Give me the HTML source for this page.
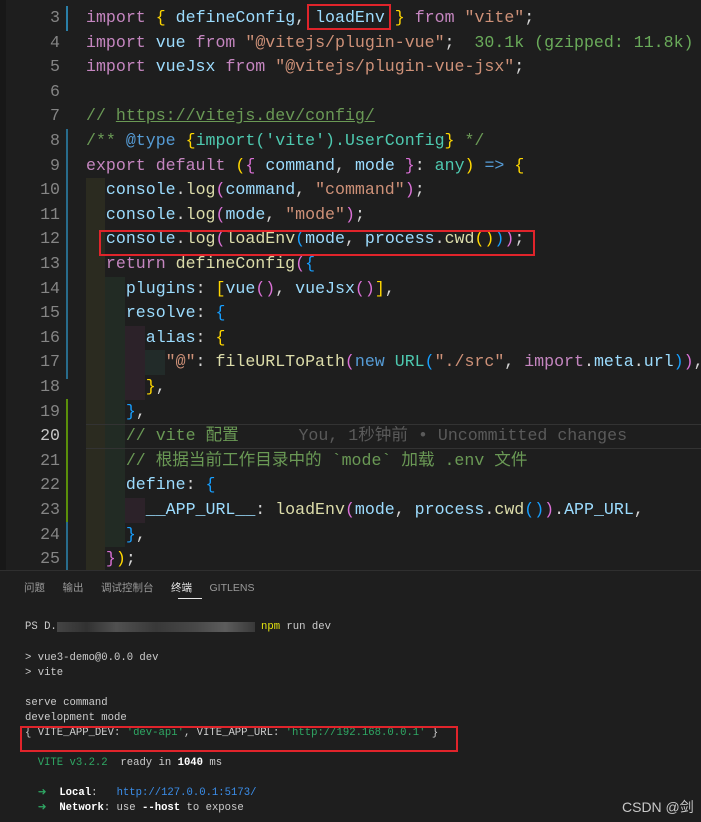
<!DOCTYPE html>
<html><head><meta charset="utf-8"><style>
body{margin:0;width:701px;height:821px;background:#1e1e1e;overflow:hidden;position:relative;font-family:"Liberation Mono","Noto Sans CJK SC",monospace}
.l{position:absolute;left:0;height:24.6px;line-height:24.6px;font-size:16.6px;white-space:pre;color:#d4d4d4}
.n{position:absolute;width:60px;text-align:right;color:#858585;left:0}
.c{position:absolute;left:86px}
.k{color:#c586c0}.s{color:#ce9178}.v{color:#9cdcfe}.f{color:#dcdcaa}.y{color:#ffd700}.p{color:#da70d6}.b{color:#179fff}.g{color:#6a9955}.t{color:#4ec9b0}.bl{color:#569cd6}.w{color:#d4d4d4}
.ig{position:absolute}
.t2{position:absolute;left:25px;font-size:10.6px;line-height:15px;white-space:pre;color:#cccccc}
.box{position:absolute;border:2px solid #e0242b}
</style></head><body>
<div style="position:absolute;left:0;top:0;width:6px;height:821px;background:#181818"></div>
<!-- gutter bars -->
<div style="position:absolute;left:66px;top:6px;width:2px;height:25px;background:#2a7fa8"></div>
<div style="position:absolute;left:66px;top:129px;width:2px;height:250px;background:#2a7fa8;opacity:.8"></div>
<div style="position:absolute;left:66px;top:399px;width:2px;height:123px;background:#5a8f0a"></div>
<div style="position:absolute;left:66px;top:522px;width:2px;height:48px;background:#2a7fa8;opacity:.8"></div>
<!-- indent rainbow -->
<div class="ig" style="left:86px;top:178px;width:19px;height:392px;background:#2b2b20"></div>
<div class="ig" style="left:105px;top:277px;width:20px;height:270px;background:#222b24"></div>
<div class="ig" style="left:125px;top:326px;width:20px;height:74px;background:#2c2229"></div>
<div class="ig" style="left:145px;top:350px;width:20px;height:25px;background:#222b29"></div>
<div class="ig" style="left:125px;top:498px;width:20px;height:25px;background:#2c2229"></div>
<!-- line 20 highlight -->
<div style="position:absolute;left:86px;top:424px;width:615px;height:23px;border-top:1px solid #333;border-bottom:1px solid #333"></div>

<div class="l" style="top:6px"><span class="n">3</span><span class="c"><span class="k">import</span> <span class="y">{</span> <span class="v">defineConfig</span>, <span class="v">loadEnv</span> <span class="y">}</span> <span class="k">from</span> <span class="s">"vite"</span>;</span></div>
<div class="l" style="top:30.6px"><span class="n">4</span><span class="c"><span class="k">import</span> <span class="v">vue</span> <span class="k">from</span> <span class="s">"@vitejs/plugin-vue"</span>;  <span style="color:#6aab5a">30.1k (gzipped: 11.8k)</span></span></div>
<div class="l" style="top:55.2px"><span class="n">5</span><span class="c"><span class="k">import</span> <span class="v">vueJsx</span> <span class="k">from</span> <span class="s">"@vitejs/plugin-vue-jsx"</span>;</span></div>
<div class="l" style="top:79.8px"><span class="n">6</span></div>
<div class="l" style="top:104.4px"><span class="n">7</span><span class="c g">// <span style="text-decoration:underline">https://vitejs.dev/config/</span></span></div>
<div class="l" style="top:129px"><span class="n">8</span><span class="c g">/** <span class="bl">@type</span> <span class="t"><span class="y">{</span>import('vite').UserConfig<span class="y">}</span></span> */</span></div>
<div class="l" style="top:153.6px"><span class="n">9</span><span class="c"><span class="k">export</span> <span class="k">default</span> <span class="y">(</span><span class="p">{</span> <span class="v">command</span>, <span class="v">mode</span> <span class="p">}</span>: <span class="t">any</span><span class="y">)</span> <span class="bl">=&gt;</span> <span class="y">{</span></span></div>
<div class="l" style="top:178.2px"><span class="n">10</span><span class="c">  <span class="v">console</span>.<span class="f">log</span><span class="p">(</span><span class="v">command</span>, <span class="s">"command"</span><span class="p">)</span>;</span></div>
<div class="l" style="top:202.8px"><span class="n">11</span><span class="c">  <span class="v">console</span>.<span class="f">log</span><span class="p">(</span><span class="v">mode</span>, <span class="s">"mode"</span><span class="p">)</span>;</span></div>
<div class="l" style="top:227.4px"><span class="n">12</span><span class="c">  <span class="v">console</span>.<span class="f">log</span><span class="p">(</span><span class="f">loadEnv</span><span class="b">(</span><span class="v">mode</span>, <span class="v">process</span>.<span class="f">cwd</span><span class="y">()</span><span class="b">)</span><span class="p">)</span>;</span></div>
<div class="l" style="top:252px"><span class="n">13</span><span class="c">  <span class="k">return</span> <span class="f">defineConfig</span><span class="p">(</span><span class="b">{</span></span></div>
<div class="l" style="top:276.6px"><span class="n">14</span><span class="c">    <span class="v">plugins</span>: <span class="y">[</span><span class="v">vue</span><span class="p">()</span>, <span class="v">vueJsx</span><span class="p">()</span><span class="y">]</span>,</span></div>
<div class="l" style="top:301.2px"><span class="n">15</span><span class="c">    <span class="v">resolve</span>: <span class="b">{</span></span></div>
<div class="l" style="top:325.8px"><span class="n">16</span><span class="c">      <span class="v">alias</span>: <span class="y">{</span></span></div>
<div class="l" style="top:350.4px"><span class="n">17</span><span class="c">        <span class="s">"@"</span>: <span class="f">fileURLToPath</span><span class="p">(</span><span class="bl">new</span> <span class="t">URL</span><span class="b">(</span><span class="s">"./src"</span>, <span class="k">import</span>.<span class="v">meta</span>.<span class="v">url</span><span class="b">)</span><span class="p">)</span>,</span></div>
<div class="l" style="top:375px"><span class="n">18</span><span class="c">      <span class="y">}</span>,</span></div>
<div class="l" style="top:399.6px"><span class="n">19</span><span class="c">    <span class="b">}</span>,</span></div>
<div class="l" style="top:424.2px"><span class="n" style="color:#c6c6c6">20</span><span class="c">    <span class="g">// vite 配置</span>      <span style="color:#5a5a5a">You, 1秒钟前 • Uncommitted changes</span></span></div>
<div class="l" style="top:448.8px"><span class="n">21</span><span class="c">    <span class="g">// 根据当前工作目录中的 `mode` 加载 .env 文件</span></span></div>
<div class="l" style="top:473.4px"><span class="n">22</span><span class="c">    <span class="v">define</span>: <span class="b">{</span></span></div>
<div class="l" style="top:498px"><span class="n">23</span><span class="c">      <span class="v">__APP_URL__</span>: <span class="f">loadEnv</span><span class="p">(</span><span class="v">mode</span>, <span class="v">process</span>.<span class="f">cwd</span><span class="b">()</span><span class="p">)</span>.<span class="v">APP_URL</span>,</span></div>
<div class="l" style="top:522.6px"><span class="n">24</span><span class="c">    <span class="b">}</span>,</span></div>
<div class="l" style="top:547.2px"><span class="n">25</span><span class="c">  <span class="p">}</span><span class="y">)</span>;</span></div>

<div class="box" style="left:307px;top:4px;width:80px;height:22px"></div>
<div class="box" style="left:99px;top:230px;width:432px;height:22px"></div>

<!-- terminal -->
<div style="position:absolute;left:0;top:570px;width:701px;height:251px;background:#1e1e1e;border-top:1px solid #2f2f2f"></div>
<div style="position:absolute;top:580px;left:24px;font-family:'Liberation Sans','Noto Sans CJK SC',sans-serif;font-size:10.5px;color:#9a9a9a;white-space:pre">问题      输出      调试控制台      <span style="color:#e7e7e7">终端</span>      GITLENS</div>
<div style="position:absolute;left:178px;top:598px;width:24px;height:1px;background:#e7e7e7"></div>
<div class="t2" style="top:620px">PS D.</div>
<div style="position:absolute;left:57px;top:622px;width:198px;height:10px;background:linear-gradient(90deg,#555 0,#3a3a3a 15%,#666 30%,#444 50%,#5a5a5a 70%,#777 85%,#444 100%);opacity:.7"></div>
<div class="t2" style="top:620px;left:261px"><span style="color:#e5e510">npm</span> run dev</div>
<div class="t2" style="top:651px">&gt; vue3-demo@0.0.0 dev
&gt; vite

serve command
development mode
{ VITE_APP_DEV: <span style="color:#23d18b;color:#2fa864">'dev-api'</span>, VITE_APP_URL: <span style="color:#2fa864">'http://192.168.0.0.1'</span> }

  <span style="color:#2fa864">VITE v3.2.2</span>  ready in <b style="color:#fff">1040</b> ms

  <span style="color:#2fa864">➜</span>  <b style="color:#fff">Local</b>:   <span style="color:#3b8eea">http://127.0.0.1:5173/</span>
  <span style="color:#2fa864">➜</span>  <b style="color:#fff">Network</b>: use <b style="color:#fff">--host</b> to expose</div>
<div class="box" style="left:20px;top:726px;width:434px;height:22px"></div>
<div style="position:absolute;left:622px;top:797px;font-family:'Liberation Sans','Noto Sans CJK SC',sans-serif;font-size:14px;color:#c8c8c8;white-space:nowrap">CSDN @剑</div>
</body></html>
